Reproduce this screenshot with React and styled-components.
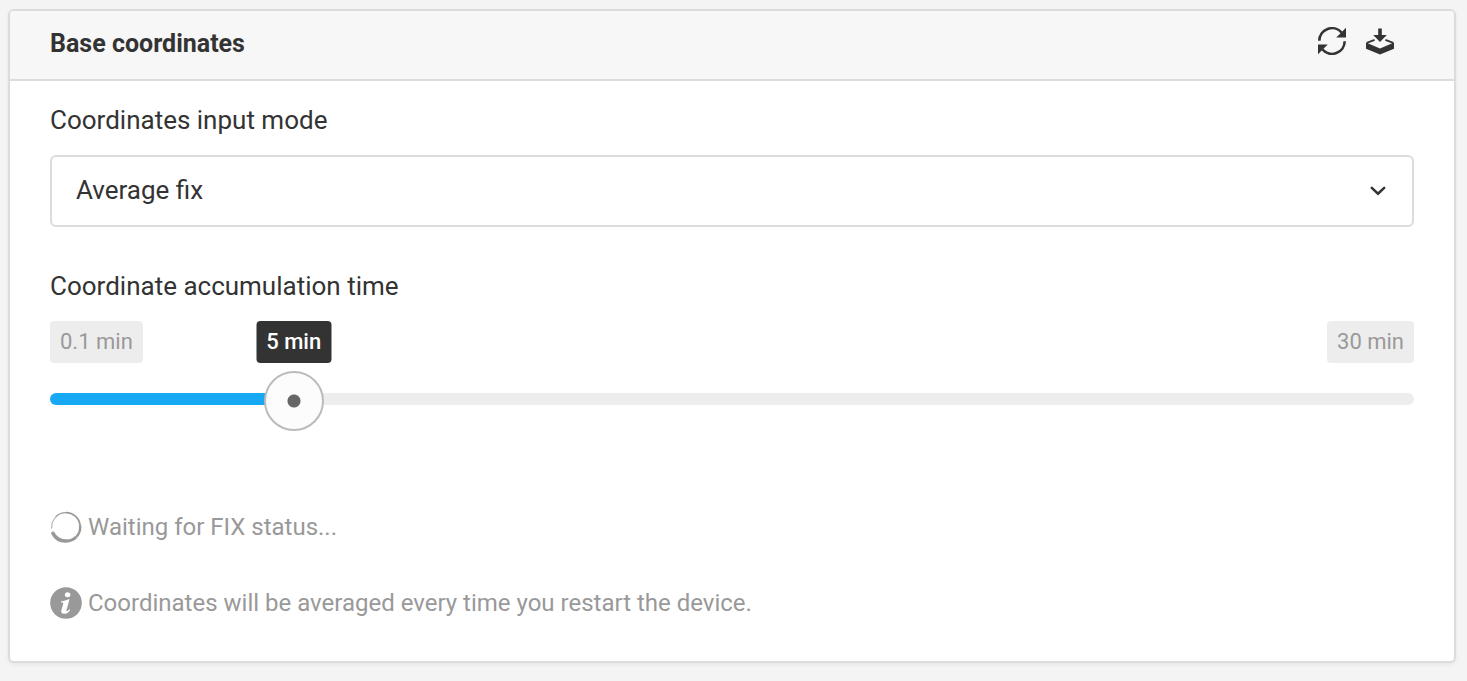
import React, { useState } from "react";
import styled, { createGlobalStyle } from "styled-components";

const GlobalStyle = createGlobalStyle`
  *, *::before, *::after { box-sizing: border-box; }
  body {
    margin: 0;
    background: #f4f4f4;
    color: #333;
    font-family: Roboto, "Liberation Sans", sans-serif;
    font-size: 26px;
    line-height: 32px;
  }
`;

const Page = styled.main`
  padding: 9px 11px 18px 8px;
`;

const Card = styled.section`
  border: 2px solid #dcdcdc;
  border-radius: 6px;
  background: #fff;
  box-shadow: 0 2px 4px rgba(0, 0, 0, 0.06);
`;

const CardHeader = styled.header`
  display: flex;
  align-items: center;
  justify-content: space-between;
  height: 70px;
  padding: 0 60px 2px 40px;
  border-bottom: 2px solid #dcdcdc;
  border-radius: 4px 4px 0 0;
  background: #f7f7f7;
`;

const Title = styled.h2`
  margin: 0;
  font-size: 25px;
  font-weight: 700;
  line-height: 32px;
`;

const Actions = styled.div`
  display: flex;
  gap: 20px;
  padding-bottom: 6px;
`;

const IconButton = styled.button`
  display: flex;
  padding: 0;
  border: 0;
  background: none;
  color: #333;
  cursor: pointer;
`;

const CardBody = styled.div`
  display: flex;
  flex-direction: column;
  padding: 23px 40px 42px;
`;

const Label = styled.label`
  margin-bottom: 19px;
`;

const SelectBox = styled.div`
  display: grid;
  align-items: center;
  margin-bottom: 43px;

  > * { grid-area: 1 / 1; }
  > svg {
    justify-self: end;
    margin-right: 28px;
    pointer-events: none;
  }
`;

const Select = styled.select`
  width: 100%;
  height: 72px;
  padding: 0 60px 2px 24px;
  border: 2px solid #dcdcdc;
  border-radius: 6px;
  appearance: none;
  background: #fff;
  color: inherit;
  font: inherit;
`;

const SliderField = styled.div`
  margin-bottom: 82px;
`;

const Scale = styled.div`
  position: relative;
  display: flex;
  justify-content: space-between;
  margin-bottom: 6px;
`;

const Badge = styled.span`
  height: 42px;
  padding: 0 10px;
  border-radius: 4px;
  background: #ededed;
  color: #999;
  font-size: 22px;
  line-height: 42px;
  white-space: nowrap;
`;

const ValueBadge = styled(Badge).attrs({ as: "output" })`
  position: absolute;
  transform: translateX(-50%);
  background: #333;
  color: #fff;
  font-weight: 500;
`;

const Range = styled.input`
  display: block;
  width: 100%;
  height: 60px;
  margin: 0;
  appearance: none;
  background: none;
  cursor: pointer;

  &::-webkit-slider-runnable-track {
    height: 12px;
    border-radius: 6px;
    background: linear-gradient(to right, #18a9f5 var(--fill), #ededed var(--fill));
  }

  &::-webkit-slider-thumb {
    width: 60px;
    height: 60px;
    margin-top: -22px;
    appearance: none;
    border: 2px solid #bbb;
    border-radius: 50%;
    background: radial-gradient(circle, #666 6px, #fcfcfc 7px);
  }
`;

const Note = styled.p`
  display: flex;
  align-items: center;
  gap: 6px;
  margin: 0;
  color: #999;
  font-size: 24px;
  line-height: 32px;

  & + & { margin-top: 44px; }
  > svg { flex: none; }
`;

function RefreshIcon() {
  return (
    <svg width="28" height="28" viewBox="0 0 28 28" aria-hidden="true">
      <g fill="none" stroke="currentColor" strokeWidth="2.6">
        <path d="M1.3 13.8A12.7 12.7 0 0 1 23.6 5.600" />
        <path d="M26.7 14.2A12.7 12.7 0 0 1 4.4 22.400" />
      </g>
      <path fill="currentColor" d="M28 .8v9.600H18.200L21.800 6.900zM0 17.600h9.800L6.200 21.100 0 27.200z" />
    </svg>
  );
}

function SaveIcon() {
  return (
    <svg width="28" height="28" viewBox="0 0 28 28" aria-hidden="true">
      <path fill="currentColor" d="M12.200 1.400h3.600v6.600h5L14 15 7.200 8h5z" />
      <path fill="currentColor" d="M0 15.400v6.400L14 27.400l14-5.600v-6.400L14 21.400z" />
      <path
        fill="none"
        stroke="currentColor"
        strokeWidth="1.8"
        d="M8.6 12.8L.8 15.8M19.4 12.8l7.8 3"
      />
    </svg>
  );
}

function ChevronIcon() {
  return (
    <svg width="16" height="10" viewBox="0 0 16 10" aria-hidden="true">
      <path
        d="M1.8 1.900L8 7.700l6.200-5.800"
        fill="none"
        stroke="#333"
        strokeWidth="2.5"
        strokeLinecap="round"
      />
    </svg>
  );
}

function SpinnerIcon() {
  return (
    <svg width="32" height="32" viewBox="0 0 32 32" aria-hidden="true">
      <g fill="none" stroke="#999">
        <path d="M1.6 17.5A14.400 14.400 0 0 1 5.6 6" strokeWidth="0.9" />
        <path d="M5.6 6A14.300 14.300 0 0 1 16 1.600" strokeWidth="1.3" />
        <path d="M16 1.600A14.200 14.200 0 0 1 30 14" strokeWidth="1.8" />
        <path d="M30 14A14.200 14.200 0 0 1 26.2 26" strokeWidth="2.4" />
        <path d="M26.2 26A14 14 0 0 1 16 30" strokeWidth="3" />
        <path d="M16 30A14 14 0 0 1 3 22.400" strokeWidth="3.5" strokeLinecap="round" />
      </g>
    </svg>
  );
}

function InfoIcon() {
  return (
    <svg width="32" height="32" viewBox="0 0 32 32" aria-hidden="true">
      <circle cx="16" cy="16" r="15.8" fill="#999" />
      <ellipse cx="17.600" cy="7.800" rx="2.800" ry="2.500" fill="#fff" />
      <path
        fill="#fff"
        d="M11.400 14.200c2.600-.2 5-.9 7-1.900h1.100l-2.900 10.500c-.3 1-.1 1.400.3 1.400.7 0 1.500-.8 2.300-2l1 .7c-1.700 2.600-3.700 3.900-6.200 3.900-2.400 0-3.200-1.400-2.600-3.600l1.700-6c.3-1.100 0-1.600-1-1.600h-1.100z"
      />
    </svg>
  );
}

const MIN = 0.1;
const MAX = 30;

export default function App() {
  const [mode, setMode] = useState("average-fix");
  const [minutes, setMinutes] = useState(5);
  const ratio = (minutes - MIN) / (MAX - MIN);
  const thumbCenter = `calc(30px + (100% - 60px) * ${ratio})`;

  return (
    <>
      <GlobalStyle />
      <Page>
        <Card>
          <CardHeader>
            <Title>Base coordinates</Title>
            <Actions>
              <IconButton type="button" aria-label="Refresh">
                <RefreshIcon />
              </IconButton>
              <IconButton type="button" aria-label="Save">
                <SaveIcon />
              </IconButton>
            </Actions>
          </CardHeader>
          <CardBody>
            <Label htmlFor="mode">Coordinates input mode</Label>
            <SelectBox>
              <Select id="mode" value={mode} onChange={(e) => setMode(e.target.value)}>
                <option value="average-fix">Average fix</option>
              </Select>
              <ChevronIcon />
            </SelectBox>
            <Label htmlFor="time">Coordinate accumulation time</Label>
            <SliderField>
              <Scale>
                <Badge>{MIN} min</Badge>
                <ValueBadge htmlFor="time" style={{ left: thumbCenter }}>
                  {minutes} min
                </ValueBadge>
                <Badge>{MAX} min</Badge>
              </Scale>
              <Range
                id="time"
                type="range"
                min={MIN}
                max={MAX}
                step={0.1}
                value={minutes}
                onChange={(e) => setMinutes(Number(e.target.value))}
                style={{ "--fill": thumbCenter }}
              />
            </SliderField>
            <Note role="status">
              <SpinnerIcon />
              Waiting for FIX status...
            </Note>
            <Note>
              <InfoIcon />
              Coordinates will be averaged every time you restart the device.
            </Note>
          </CardBody>
        </Card>
      </Page>
    </>
  );
}
